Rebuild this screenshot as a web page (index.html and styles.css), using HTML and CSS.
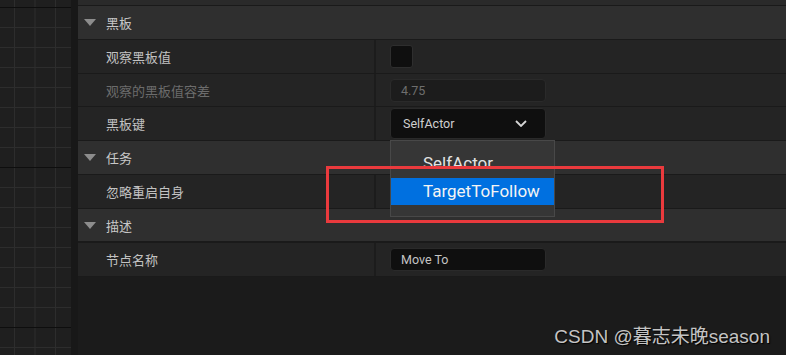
FILE: index.html
```html
<!DOCTYPE html>
<html lang="zh-CN">
<head>
    <meta charset="UTF-8">
    <title>Details - Move To</title>
    <link rel="stylesheet" href="styles.css">
</head>
<body>
    <div class="editor">
        <div class="graph"></div>
        <div class="splitter"></div>

        <div class="details">
            <div class="top-strip"></div>

            <div class="category"><span class="arrow"></span>黑板</div>
            <div class="row">
                <div class="name">观察黑板值</div>
                <div class="value"><span class="checkbox"></span></div>
            </div>
            <div class="row short">
                <div class="name disabled">观察的黑板值容差</div>
                <div class="value"><div class="field dim">4.75</div></div>
            </div>
            <div class="row">
                <div class="name">黑板键</div>
                <div class="value">
                    <div class="combo">
                        <span>SelfActor</span>
                        <svg class="chevron" width="12" height="7" viewBox="0 0 12 7">
                            <path d="M1 1 L6 6 L11 1" fill="none" stroke="#d6d6d6" stroke-width="1.8"/>
                        </svg>
                        <!-- open dropdown list -->
                        <div class="menu">
                            <div class="menu-item">SelfActor</div>
                            <div class="menu-item selected">TargetToFollow</div>
                        </div>
                    </div>
                </div>
            </div>

            <div class="category"><span class="arrow"></span>任务</div>
            <div class="row">
                <div class="name">忽略重启自身</div>
                <div class="value"></div>
            </div>

            <div class="category short"><span class="arrow"></span>描述</div>
            <div class="row">
                <div class="name">节点名称</div>
                <div class="value"><div class="field">Move To</div></div>
            </div>
        </div>
    </div>

    <div class="mark-box"></div>
    <div class="watermark">CSDN @暮志未晚season</div>
</body>
</html>
```

FILE: styles.css
```css
body {
    margin: 0;
    background-color: #1b1b1b;
    font-family: "Noto Sans CJK SC", "Noto Sans", sans-serif;
    font-size: 13px;
    color: #c2c2c2;
    overflow: hidden;
}
.editor {
    display: flex;
    height: 355px;
}
.graph {
    width: 71px;
    background-color: #1f1f1f;
    background-image:
        linear-gradient(to bottom, #0e0e0e 1px, transparent 1px),
        linear-gradient(to right, #2d2d2d 1px, transparent 1px),
        linear-gradient(to bottom, #2d2d2d 1px, transparent 1px);
    background-size: 100% 160px, 20.5px 100%, 100% 20px;
    background-position: 0 7px, 14px 0, 0 7px;
}
.splitter {
    width: 7px;
    background-color: #181818;
}
.details {
    flex: 1;
    display: flex;
    flex-direction: column;
}
.top-strip {
    height: 5px;
    background-color: #2a2a2a;
    border-bottom: 1px solid #1a1a1a;
}
.category {
    display: flex;
    align-items: center;
    height: 33px;
    background-color: #2f2f2f;
    border-bottom: 1px solid #1a1a1a;
    color: #c8c8c8;
}
.category.short {
    height: 32px;
    border-bottom-width: 2px;
}
.arrow {
    width: 0;
    height: 0;
    margin: 0 10px 0 6px;
    border-left: 6px solid transparent;
    border-right: 6px solid transparent;
    border-top: 7px solid #8d8d8d;
}
.row {
    display: flex;
    height: 33px;
    background-color: #242424;
    border-bottom: 1px solid #1a1a1a;
}
.row.short {
    height: 32px;
}
.name {
    display: flex;
    align-items: center;
    width: 268px;
    padding-left: 28px;
    border-right: 2px solid #1c1c1c;
}
.name.disabled {
    color: #6c6c6c;
}
.value {
    flex: 1;
    display: flex;
    align-items: center;
    padding-left: 14px;
}
.checkbox {
    width: 21px;
    height: 21px;
    background-color: #0f0f0f;
    border: 1px solid #2e2e2e;
    border-radius: 3px;
}
.field {
    box-sizing: border-box;
    width: 156px;
    height: 23px;
    padding-left: 10px;
    line-height: 21px;
    background-color: #0f0f0f;
    border: 1px solid #2a2a2a;
    border-radius: 4px;
    font-family: Roboto, "Noto Sans", sans-serif;
    font-size: 12.5px;
    color: #c4c4c4;
}
.field.dim {
    background-color: #1c1c1c;
    color: #6e6e6e;
}
.combo {
    position: relative;
    box-sizing: border-box;
    display: flex;
    align-items: center;
    justify-content: space-between;
    width: 156px;
    height: 31px;
    padding: 0 18px 0 12px;
    background-color: #0f0f0f;
    border: 1px solid #2a2a2a;
    border-radius: 4px;
    font-family: Roboto, "Noto Sans", sans-serif;
    font-size: 12.5px;
    color: #cfcfcf;
}
.menu {
    position: absolute;
    top: 31px;
    left: -1px;
    width: 165px;
    box-sizing: border-box;
    padding: 9px 0 11px;
    background-color: #363636;
    border: 1px solid #484848;
    font-size: 17px;
    color: #e2e2e2;
    z-index: 2;
}
.menu-item {
    height: 27px;
    line-height: 27px;
    padding-left: 32px;
    margin-bottom: 1px;
}
.menu-item:last-child {
    margin-bottom: 0;
}
.menu-item.selected {
    background-color: #0070e0;
    color: #f4f4f4;
}
.mark-box {
    position: absolute;
    left: 326px;
    top: 166px;
    width: 338px;
    height: 57px;
    box-sizing: border-box;
    border: 3px solid #ea3a3d;
    z-index: 3;
}
.watermark {
    position: absolute;
    right: 16px;
    top: 321px;
    font-family: "Liberation Sans", "Noto Sans CJK SC", sans-serif;
    font-size: 19px;
    color: #c4c4c4;
    text-shadow: 1px 1px 1px #000;
    z-index: 3;
}
```
